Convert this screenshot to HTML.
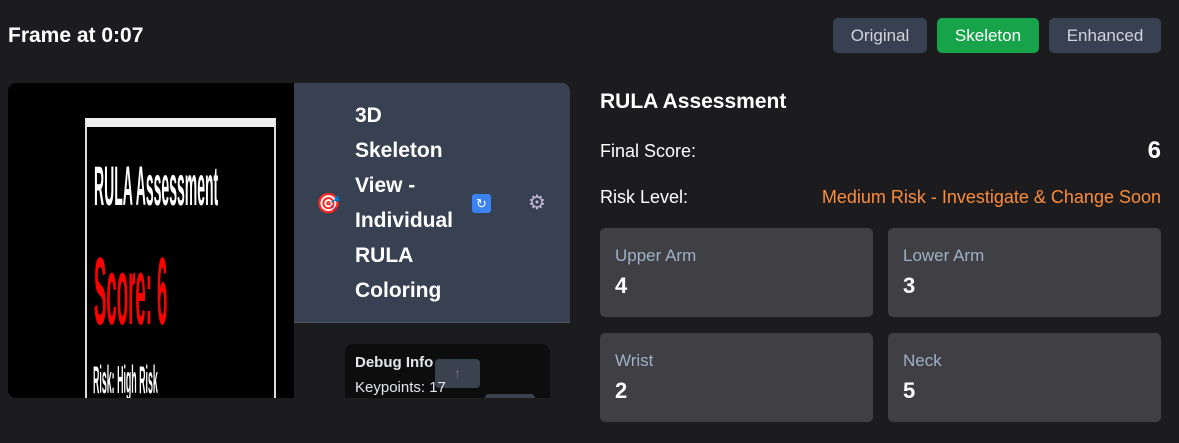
<!DOCTYPE html>
<html><head><meta charset="utf-8"><style>
*{margin:0;padding:0;box-sizing:border-box}
body{width:1179px;height:443px;background:#1c1c1e;font-family:"Liberation Sans",sans-serif;color:#fff;position:relative;overflow:hidden}
.a{position:absolute}
.btn{position:absolute;top:18px;height:35px;border-radius:5px;font-size:17px;line-height:35px;text-align:center;color:#d1d5db;background:#374151}
.card{position:absolute;width:273px;height:89px;background:#3f3f44;border-radius:5px}
.card .l{position:absolute;left:15px;top:18px;font-size:17px;color:#9fb0c8}
.card .v{position:absolute;left:15px;top:45px;font-size:22px;font-weight:bold}
.c{position:absolute;transform-origin:left top;white-space:nowrap;line-height:1;font-weight:bold}
</style></head><body>
<div class="a" style="left:8px;top:24px;font-size:21px;font-weight:bold">Frame at 0:07</div>
<div class="btn" style="left:833px;width:94px">Original</div>
<div class="btn" style="left:937px;width:102px;background:#16a34a;color:#fff">Skeleton</div>
<div class="btn" style="left:1049px;width:112px">Enhanced</div>

<div class="a" style="left:8px;top:83px;width:562px;height:315px;border-radius:8px;overflow:hidden;background:#1c1c1e">
 <div class="a" style="left:0;top:0;width:286px;height:315px;background:#000;overflow:hidden">
  <div class="a" style="left:77px;top:35px;width:191px;height:290px;border:2px solid #ddd;border-top:9px solid #eee"></div>
  <div class="c" style="left:86px;top:76px;font-size:40px;transform:scale(0.35,1.4)">RULA Assessment</div>
  <div class="c" style="left:86px;top:161px;font-size:60px;color:#f00;transform:scale(0.31,1.6)">Score: 6</div>
  <div class="c" style="left:85px;top:277px;font-size:26px;transform:scale(0.34,1.5)">Risk: High Risk</div>
 </div>
 <div class="a" style="left:286px;top:0;width:276px;height:240px;background:#374151;border-bottom:1px solid #4b5563">
  <div class="a" style="left:22px;top:108px;font-size:20px">🎯</div>
  <div class="a" style="left:61px;top:15px;font-size:21px;font-weight:bold;line-height:35px;width:120px">3D<br>Skeleton<br>View -<br>Individual<br>RULA<br>Coloring</div>
  <div class="a" style="left:178px;top:111px;width:19px;height:19px;background:#3b82f6;border-radius:3px;font-size:13px;text-align:center;line-height:19px">↻</div>
  <div class="a" style="left:234px;top:107px;font-size:20px;color:#c4b5d8">⚙</div>
 </div>
 <div class="a" style="left:337px;top:261px;width:205px;height:60px;background:#0d0d0e;border-radius:8px"></div>
 <div class="a" style="left:427px;top:276px;width:45px;height:29px;background:#3a4250;border-radius:4px;color:#777;text-align:center;line-height:29px;font-size:14px">↑</div>
 <div class="a" style="left:477px;top:311px;width:50px;height:20px;background:#3a4250;border-radius:4px"></div>
 <div class="a" style="left:347px;top:271px;font-size:15px;font-weight:bold;color:#e5e7eb">Debug Info</div>
 <div class="a" style="left:347px;top:296px;font-size:15px;color:#e5e7eb">Keypoints: 17</div>
</div>

<div class="a" style="left:600px;top:90px;font-size:21px;font-weight:bold">RULA Assessment</div>
<div class="a" style="left:600px;top:141px;font-size:18px">Final Score:</div>
<div class="a" style="right:18px;top:137px;font-size:24px;font-weight:bold">6</div>
<div class="a" style="left:600px;top:187px;font-size:18px">Risk Level:</div>
<div class="a" style="right:18px;top:187px;font-size:18px;color:#fb8c3c">Medium Risk - Investigate &amp; Change Soon</div>

<div class="card" style="left:600px;top:228px"><div class="l">Upper Arm</div><div class="v">4</div></div>
<div class="card" style="left:888px;top:228px"><div class="l">Lower Arm</div><div class="v">3</div></div>
<div class="card" style="left:600px;top:333px"><div class="l">Wrist</div><div class="v">2</div></div>
<div class="card" style="left:888px;top:333px"><div class="l">Neck</div><div class="v">5</div></div>
</body></html>
